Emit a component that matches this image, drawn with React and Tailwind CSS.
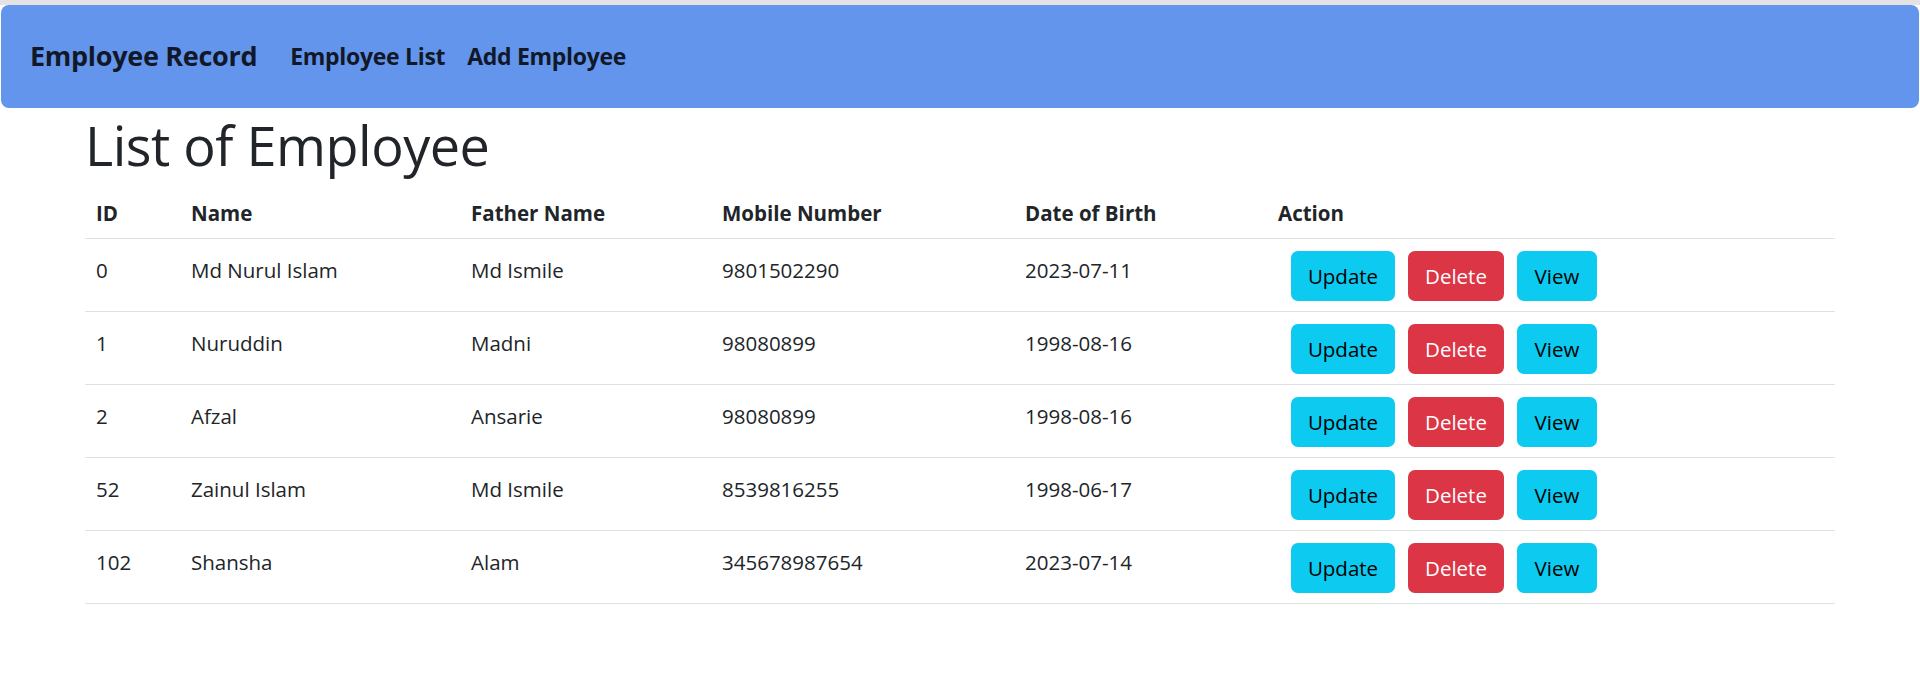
import React from "react";

const rows = [
  { id: "0", name: "Md Nurul Islam", father: "Md Ismile", mobile: "9801502290", dob: "2023-07-11" },
  { id: "1", name: "Nuruddin", father: "Madni", mobile: "98080899", dob: "1998-08-16" },
  { id: "2", name: "Afzal", father: "Ansarie", mobile: "98080899", dob: "1998-08-16" },
  { id: "52", name: "Zainul Islam", father: "Md Ismile", mobile: "8539816255", dob: "1998-06-17" },
  { id: "102", name: "Shansha", father: "Alam", mobile: "345678987654", dob: "2023-07-14" },
];

export default function App() {
  return (
    <div className="min-h-[679px] bg-white text-[#212529]" style={{ fontFamily: '"Open Sans", "Noto Sans", sans-serif' }}>
      <div className="h-[5px] bg-[#e3e3e3]" />
      <nav className="mx-[1px] flex h-[103px] items-center rounded-[8px] bg-[#6495ed] px-[29px] text-[#111827]">
        <span className="text-[27px] font-bold tracking-[-0.3px]">Employee Record</span>
        <div className="ml-[33px] flex gap-[22px] text-[23px] font-bold tracking-[-0.3px]">
          <span>Employee List</span>
          <span>Add Employee</span>
        </div>
      </nav>
      <div className="mx-[85px]">
        <h1 className="mt-[4px] mb-[10px] text-[54px] font-medium leading-[66px] tracking-[-0.5px]">List of Employee</h1>
        <table className="w-full border-collapse text-[20.5px]">
          <thead>
            <tr className="border-b border-[#dee2e6] text-left">
              <th className="w-[95px] px-[11px] py-[10px] font-bold leading-[30px]">ID</th>
              <th className="w-[280px] px-[11px] py-[10px] font-bold leading-[30px]">Name</th>
              <th className="w-[251px] px-[11px] py-[10px] font-bold leading-[30px]">Father Name</th>
              <th className="w-[303px] px-[11px] py-[10px] font-bold leading-[30px]">Mobile Number</th>
              <th className="w-[253px] px-[11px] py-[10px] font-bold leading-[30px]">Date of Birth</th>
              <th className="px-[11px] py-[10px] font-bold leading-[30px]">Action</th>
            </tr>
          </thead>
          <tbody>
            {rows.map((r) => (
              <tr key={r.id} className="border-b border-[#dee2e6]">
                <td className="px-[11px] pt-[15px] pb-[25px] align-top leading-[32px]">{r.id}</td>
                <td className="px-[11px] pt-[15px] pb-[25px] align-top leading-[32px]">{r.name}</td>
                <td className="px-[11px] pt-[15px] pb-[25px] align-top leading-[32px]">{r.father}</td>
                <td className="px-[11px] pt-[15px] pb-[25px] align-top leading-[32px]">{r.mobile}</td>
                <td className="px-[11px] pt-[15px] pb-[25px] align-top leading-[32px]">{r.dob}</td>
                <td className="px-[11px] align-top">
                  <div className="flex gap-[13px] pt-[12px] pl-[13px]">
                    <button className="h-[50px] w-[104px] rounded-[7px] bg-[#0dcaf0] text-[20.5px] text-black">Update</button>
                    <button className="h-[50px] w-[96px] rounded-[7px] bg-[#dc3545] text-[20.5px] text-white">Delete</button>
                    <button className="h-[50px] w-[80px] rounded-[7px] bg-[#0dcaf0] text-[20.5px] text-black">View</button>
                  </div>
                </td>
              </tr>
            ))}
          </tbody>
        </table>
      </div>
    </div>
  );
}
